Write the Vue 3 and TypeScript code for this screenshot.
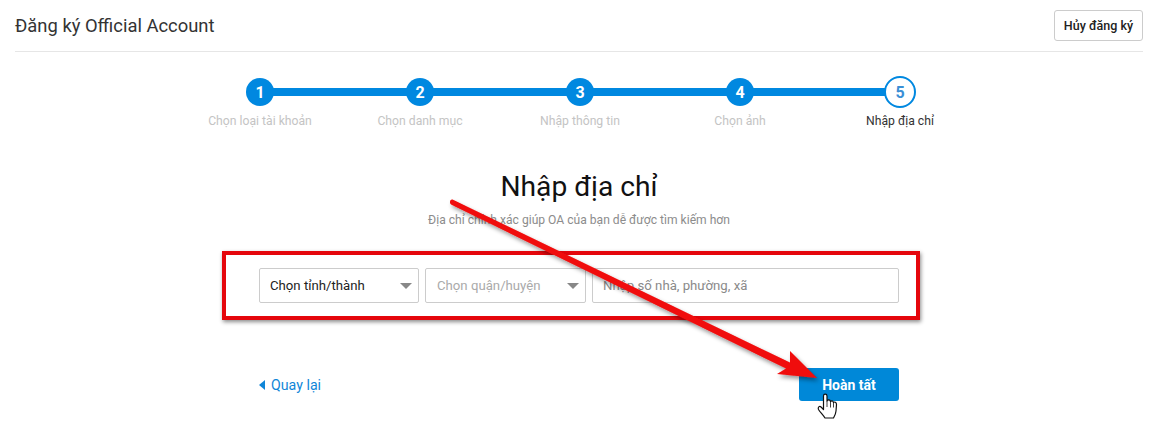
<template>
  <div class="page">
    <header class="header">
      <h1 class="header-title">Đăng ký Official Account</h1>
      <button class="cancel">Hủy đăng ký</button>
    </header>

    <ol class="steps">
      <li
        v-for="(step, i) in steps"
        :key="step"
        :class="['step', { current: i === steps.length - 1 }]"
      >
        <span class="dot">{{ i + 1 }}</span>
        <span class="step-label">{{ step }}</span>
      </li>
    </ol>

    <div class="intro">
      <h2 class="title">Nhập địa chỉ</h2>
      <p class="subtitle">Địa chỉ chính xác giúp OA của bạn dễ được tìm kiếm hơn</p>
    </div>

    <div class="highlight">
      <div class="select filled">
        <span>Chọn tỉnh/thành</span>
        <i class="caret"></i>
      </div>
      <div class="select second">
        <span>Chọn quận/huyện</span>
        <i class="caret"></i>
      </div>
      <div class="address">Nhập số nhà, phường, xã</div>
    </div>

    <div class="actions">
      <a class="back"><i class="back-icon"></i>Quay lại</a>
      <button class="finish">Hoàn tất</button>
    </div>

    <svg class="overlay" width="1151" height="444" viewBox="0 0 1151 444">
      <defs>
        <filter id="soft" x="-10%" y="-10%" width="125%" height="130%">
          <feDropShadow dx="2" dy="3" stdDeviation="2" flood-color="#000" flood-opacity="0.4" />
        </filter>
      </defs>
      <path
        filter="url(#soft)"
        d="M452.500 199.500 L790 362.600 L790 351 L817 378 L777 374 L786 368.600 L451 204.500 C449 203 450 199 452.500 199.500 Z"
        fill="#f00a0a"
      />
      <path
        d="M823.500 396 C823.500 393.500 827 393.500 827 396 L827 401 C828 399.500 830 399.500 830.500 401.500 C831.500 400.500 833 400.500 833.500 402.500 C834.500 401.500 836.500 402 836.500 404.500 L836 411 C835.800 414 834.500 416 833.500 418 L825 418 C823 415 820 412 818.500 409.500 C817.500 407.500 819.500 405.500 821 407 L823.500 409.500 Z"
        fill="#fff"
        stroke="#111"
        stroke-width="1.2"
        stroke-linejoin="round"
      />
      <path d="M827 401v6M830.500 401.500v6M833.500 402.500v5" stroke="#111" stroke-width="0.8" />
    </svg>
  </div>
</template>

<script setup lang="ts">
const steps: string[] = [
  "Chọn loại tài khoản",
  "Chọn danh mục",
  "Nhập thông tin",
  "Chọn ảnh",
  "Nhập địa chỉ",
];
</script>

<style>
html,
body {
  margin: 0;
  background: #fff;
}
</style>

<style scoped>
.page {
  position: relative;
  width: 1151px;
  height: 444px;
  overflow: hidden;
  font-family: Roboto, "Noto Sans", sans-serif;
  color: #333;
}

.header {
  display: flex;
  align-items: center;
  justify-content: space-between;
  height: 51px;
  margin: 0 8px 0 15px;
  border-bottom: 1px solid #e6e6e6;
  box-sizing: content-box;
}

.header-title {
  margin: 0;
  font-size: 18.4px;
  font-weight: 400;
  color: #333;
}

.cancel {
  width: 89px;
  height: 31px;
  padding: 0;
  background: #fff;
  border: 1px solid #ccc;
  border-radius: 3px;
  font: 500 12.5px Roboto, sans-serif;
  color: #222;
}

.steps {
  display: flex;
  width: 800px;
  margin: 24px 0 0 180px;
  padding: 0;
  list-style: none;
}

.step {
  position: relative;
  display: flex;
  flex-direction: column;
  align-items: center;
  width: 160px;
}

.step:not(:last-child)::after {
  content: "";
  position: absolute;
  left: 80px;
  top: 12px;
  width: 160px;
  height: 8px;
  background: #0088e0;
}

.dot {
  position: relative;
  z-index: 1;
  display: flex;
  align-items: center;
  justify-content: center;
  width: 28px;
  height: 28px;
  margin-top: 2px;
  border-radius: 50%;
  background: #0088e0;
  color: #fff;
  font-size: 16px;
  font-weight: 700;
}

.current .dot {
  box-sizing: border-box;
  width: 32px;
  height: 32px;
  margin-top: 0;
  background: #fff;
  border: 2px solid #0088e0;
  color: #3a8fd6;
}

.step-label {
  margin-top: 7px;
  font-size: 12.2px;
  line-height: 16px;
  white-space: nowrap;
  color: #c4c4c4;
}

.current .step-label {
  margin-top: 5px;
  color: #333;
}

.intro {
  margin-top: 40px;
  padding-left: 7px;
  text-align: center;
}

.title {
  margin: 0;
  font-size: 28.2px;
  line-height: 36px;
  font-weight: 400;
  color: #111;
}

.subtitle {
  margin: 7px 0 0;
  font-size: 12.1px;
  line-height: 16px;
  color: #8c8c8c;
}

.highlight {
  display: flex;
  gap: 6px;
  box-sizing: border-box;
  width: 698px;
  height: 69px;
  margin: 23px 0 0 222px;
  padding: 13px 17px 13px 33px;
  border: 4px solid #e5060c;
  box-shadow: 1px 2px 4px rgba(0, 0, 0, 0.45);
}

.select,
.address {
  display: flex;
  align-items: center;
  box-sizing: border-box;
  height: 35px;
  border: 1px solid #ccc;
  border-radius: 2px;
  font-size: 13.2px;
  color: #aaa;
}

.select {
  justify-content: space-between;
  width: 160px;
  padding: 0 6px 0 10px;
}

.select.second {
  width: 161px;
  padding-left: 11px;
}

.select.filled {
  color: #222;
}

.caret {
  width: 0;
  height: 0;
  border-left: 6px solid transparent;
  border-right: 6px solid transparent;
  border-top: 6px solid #888;
}

.address {
  flex: 1;
  padding: 0 10px;
  color: #8a8a8a;
}

.actions {
  display: flex;
  align-items: center;
  justify-content: space-between;
  width: 641px;
  margin: 48px 0 0 258px;
}

.back {
  display: flex;
  align-items: center;
  gap: 6px;
  font-size: 14.2px;
  color: #0f86d8;
}

.back-icon {
  width: 0;
  height: 0;
  margin-left: 1px;
  border-top: 5.5px solid transparent;
  border-bottom: 5.5px solid transparent;
  border-right: 6px solid #0f86d8;
}

.finish {
  width: 100px;
  height: 33px;
  padding: 0;
  background: #0088d8;
  border: none;
  border-radius: 3px;
  font: 700 14px Roboto, sans-serif;
  color: #fff;
}

.overlay {
  position: absolute;
  left: 0;
  top: 0;
  pointer-events: none;
}
</style>
